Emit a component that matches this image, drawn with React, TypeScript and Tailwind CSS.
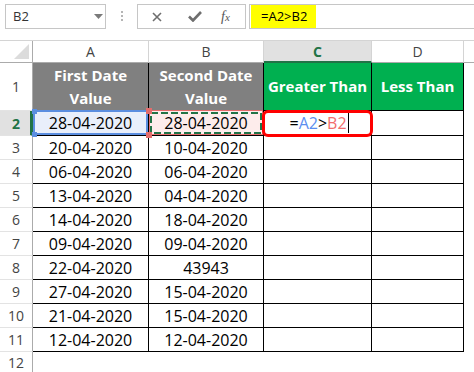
const dates: [string, string][] = [
  ["20-04-2020", "10-04-2020"],
  ["06-04-2020", "06-04-2020"],
  ["13-04-2020", "04-04-2020"],
  ["14-04-2020", "18-04-2020"],
  ["09-04-2020", "09-04-2020"],
  ["22-04-2020", "43943"],
  ["27-04-2020", "15-04-2020"],
  ["21-04-2020", "15-04-2020"],
  ["12-04-2020", "12-04-2020"],
]

function RowNum({ n }: { n: number }) {
  return (
    <div className="flex items-center justify-center border-r border-b border-r-[#ababab] border-b-[#e3e3e3] text-[14px] text-[#444]">
      {n}
    </div>
  )
}

function DataCell({ children }: { children?: React.ReactNode }) {
  return (
    <div className="flex items-center justify-center border-r border-b border-black text-[16px] text-black">
      {children}
    </div>
  )
}

function FormulaBar() {
  return (
    <div className="flex h-[40px] items-start pt-[4px] pl-[5px]">
      {/* name box */}
      <div className="relative flex h-[25px] w-[101px] items-center border border-[#c6c6c6] pl-[7px] text-[13px] text-[#333]">
        B2
        <svg className="absolute left-[88px] top-[9px]" width="9" height="5" viewBox="0 0 9 5">
          <polygon points="0,0 9,0 4.5,5" fill="#7a7a7a" />
        </svg>
      </div>
      <div className="ml-[15px] mt-[7px] flex flex-col gap-[2px]">
        <span className="block h-[2px] w-[2px] bg-[#b5b5b5]" />
        <span className="block h-[2px] w-[2px] bg-[#b5b5b5]" />
        <span className="block h-[2px] w-[2px] bg-[#b5b5b5]" />
      </div>
      {/* cancel / enter / fx */}
      <div className="ml-[14px] flex h-[25px] w-[109px] items-center border border-[#c6c6c6]">
        <svg className="ml-[14px]" width="10" height="10" viewBox="0 0 10 10">
          <path d="M1 1 L9 9 M9 1 L1 9" stroke="#6e6e6e" strokeWidth="1.6" />
        </svg>
        <svg className="ml-[26px]" width="14" height="11" viewBox="0 0 14 11">
          <path d="M1 5.5 L5 9.5 L13 1" stroke="#6e6e6e" strokeWidth="2.6" fill="none" />
        </svg>
        <span className="ml-[19px] font-['Liberation_Serif',serif] text-[14px] italic text-[#555]">
          f<span className="text-[11px]">x</span>
        </span>
      </div>
      <div className="ml-[3px] flex h-[25px] flex-1 items-center border border-r-0 border-[#c6c6c6]">
        <div className="ml-px flex h-[23px] w-[65px] items-center bg-[#ffff00] pl-[10px] text-[13px] text-black">
          =A2&gt;B2
        </div>
      </div>
    </div>
  )
}

export default function App() {
  return (
    <div className="h-[372px] w-[474px] overflow-hidden bg-white font-['Open_Sans',sans-serif]">
      <FormulaBar />
      <div className="grid grid-cols-[33px_116px_115px_108px_92px_1fr] grid-rows-[22px_48px_25px_repeat(9,24px)_22px] border-t border-[#d4d4d4]">
        {/* column headers */}
        <div className="relative border-r border-b border-[#ababab]">
          <svg className="absolute right-[3px] bottom-[3px]" width="15" height="15" viewBox="0 0 15 15">
            <polygon points="15,0 15,15 0,15" fill="#dcdcdc" />
          </svg>
        </div>
        <div className="flex items-center justify-center border-r border-b border-r-[#d4d4d4] border-b-[#ababab] text-[14px] text-[#444]">A</div>
        <div className="flex items-center justify-center border-r border-b border-r-[#d4d4d4] border-b-[#ababab] text-[14px] text-[#444]">B</div>
        <div className="flex items-center justify-center border-r border-b-2 border-r-[#d4d4d4] border-b-[#217346] bg-[#e1e1e1] text-[14px] font-bold text-[#217346]">C</div>
        <div className="flex items-center justify-center border-r border-b border-r-[#d4d4d4] border-b-[#ababab] text-[14px] text-[#444]">D</div>
        <div className="border-b border-[#ababab]" />

        {/* row 1 */}
        <RowNum n={1} />
        <div className="flex flex-col items-center justify-center border-r border-b border-black bg-[#808080] text-[15px] font-bold leading-[23px] text-white">
          <span>First Date</span>
          <span>Value</span>
        </div>
        <div className="flex flex-col items-center justify-center border-r border-b border-black bg-[#808080] text-[15px] font-bold leading-[23px] text-white">
          <span>Second Date</span>
          <span>Value</span>
        </div>
        <div className="flex items-center justify-center border-r border-b border-black bg-[#00b050] text-[15px] font-bold text-white">
          Greater Than
        </div>
        <div className="flex items-center justify-center border-r border-b border-black bg-[#00b050] text-[15px] font-bold text-white">
          Less Than
        </div>
        <div />

        {/* row 2 */}
        <div className="flex items-center justify-center border-r-[3px] border-b border-r-[#217346] border-b-[#e3e3e3] bg-[#e1e1e1] pl-[2px] text-[14px] font-bold text-[#217346]">
          2
        </div>
        <div className="relative flex items-center justify-center border-r border-b border-black bg-[#e9effb] text-[16px] text-black">
          <div className="absolute -top-px left-0 right-0 bottom-0 border-2 border-[#5b8ee0]" />
          <div className="absolute -top-[2px] -left-[1px] h-[5px] w-[5px] bg-[#5b8ee0]" />
          <div className="absolute -bottom-[2px] -left-[1px] h-[5px] w-[5px] bg-[#5b8ee0]" />
          <span className="relative">28-04-2020</span>
        </div>
        <div className="relative flex items-center justify-center border-r border-b border-black bg-[#fdeceb] text-[16px] text-black">
          <div className="absolute -top-px left-0 right-0 bottom-0 border border-[#e36d6d]" />
          {/* marching ants */}
          <svg className="absolute top-px left-px h-[calc(100%-2px)] w-[calc(100%-2px)]" preserveAspectRatio="none">
            <rect x="1" y="1" width="calc(100% - 2px)" height="calc(100% - 2px)" fill="none" stroke="#217346" strokeWidth="2" strokeDasharray="7 3" style={{ width: "calc(100% - 2px)", height: "calc(100% - 2px)" }} />
          </svg>
          <div className="absolute -top-[3px] -left-[3px] z-10 h-[6px] w-[6px] bg-[#e36d6d]" />
          <div className="absolute -bottom-[3px] -left-[3px] z-10 h-[6px] w-[6px] bg-[#e36d6d]" />
          <span className="relative">28-04-2020</span>
        </div>
        <div className="relative flex items-center justify-center border-r border-b border-black text-[16px]">
          <div className="absolute -top-px -left-[2px] -right-[2px] -bottom-[2px] z-20 rounded-[6px] border-[3px] border-[#ff0000]" />
          <span className="relative ml-[3px] flex items-center">
            <span className="text-black">=</span>
            <span className="text-[#5b8ef0]">A2</span>
            <span className="text-black">&gt;</span>
            <span className="text-[#f26d6d]">B2</span>
            <span className="ml-px inline-block h-[20px] w-px bg-black" />
          </span>
        </div>
        <DataCell />
        <div />

        {/* rows 3 - 11 */}
        {dates.map(([a, b], i) => (
          <div key={i} className="contents">
            <RowNum n={i + 3} />
            <DataCell>{a}</DataCell>
            <DataCell>{b}</DataCell>
            <DataCell />
            <DataCell />
            <div />
          </div>
        ))}

        {/* row 12 */}
        <RowNum n={12} />
        <div />
        <div />
        <div />
        <div />
        <div />
      </div>
    </div>
  )
}
